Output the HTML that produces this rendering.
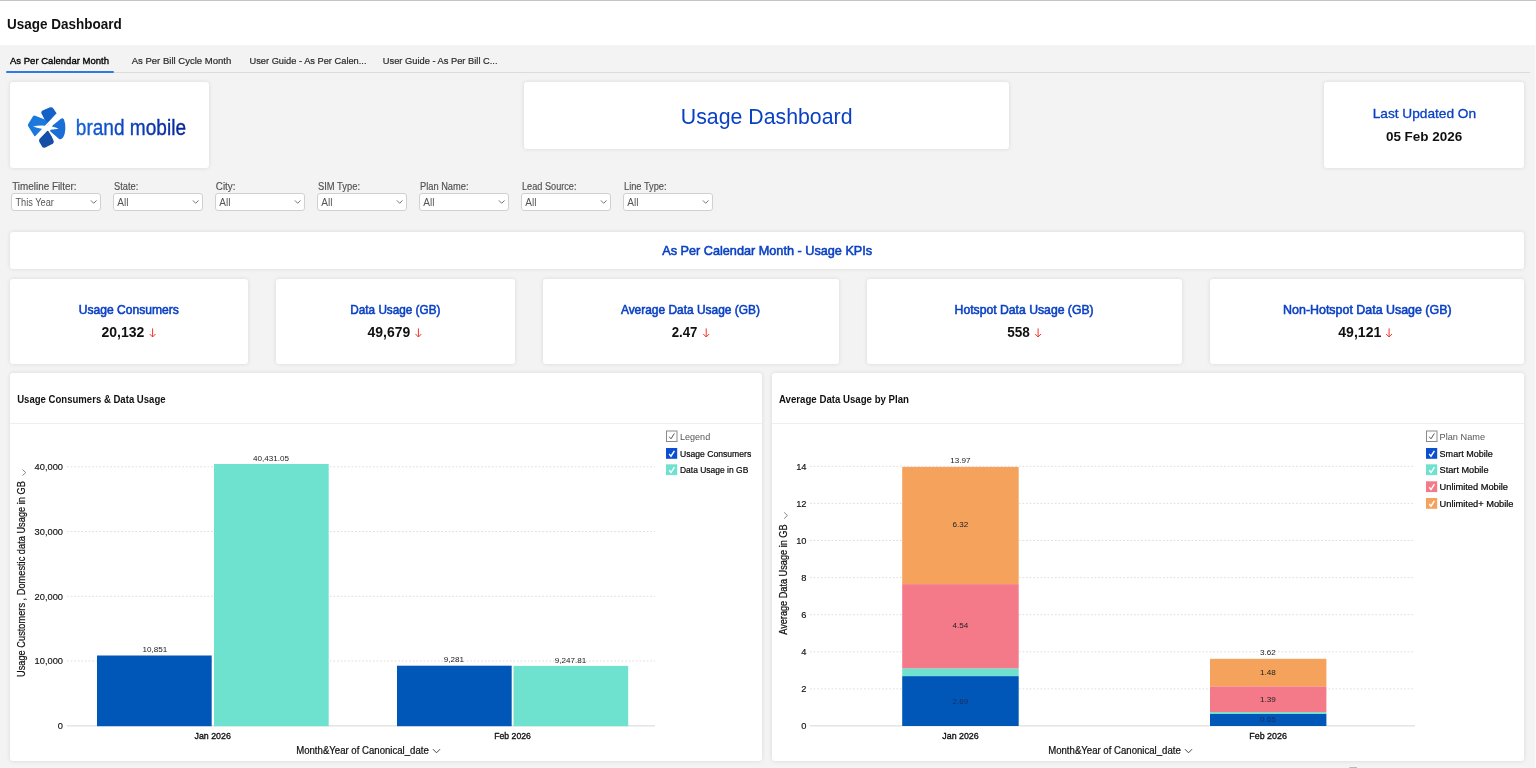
<!DOCTYPE html>
<html>
<head>
<meta charset="utf-8">
<title>Usage Dashboard</title>
<style>
*{box-sizing:border-box;margin:0;padding:0}
html,body{width:1536px;height:768px;overflow:hidden}
body{background:#f3f3f3;font-family:"Liberation Sans",sans-serif;color:#111;position:relative}
.abs{position:absolute}
.card{position:absolute;background:#fff;border-radius:3px;box-shadow:0 0 4px rgba(0,0,0,.11)}
#topbar{left:0;top:0;width:1536px;height:45px;background:#fff;border-top:1px solid #c4c4c4}
#tabline{left:6px;top:71.6px;width:1524px;height:1.2px;background:#dcdcdc}
#tabsel{left:6px;top:71px;width:108px;height:2px;background:#2f7be6;border-radius:1px}
.fsel{position:absolute;top:193px;width:90px;height:18px;background:#fff;border:1px solid #d0d0d0;border-radius:3px}
svg text{white-space:pre}
</style>
</head>
<body>
<div id="topbar" class="abs"></div>
<div id="tabline" class="abs"></div>
<div id="tabsel" class="abs"></div>

<div class="card" style="left:10px;top:82px;width:199.3px;height:86px"></div>
<div class="card" style="left:524px;top:82px;width:485.29999999999995px;height:66.69999999999999px"></div>
<div class="card" style="left:1324px;top:82px;width:200px;height:86px"></div>
<div class="fsel" style="left:11px"></div>
<div class="fsel" style="left:113px"></div>
<div class="fsel" style="left:215px"></div>
<div class="fsel" style="left:317px"></div>
<div class="fsel" style="left:419px"></div>
<div class="fsel" style="left:521px"></div>
<div class="fsel" style="left:623px"></div>
<div class="card" style="left:10px;top:232px;width:1514px;height:37.19999999999999px"></div>
<div class="card" style="left:10px;top:278.7px;width:238px;height:85.5px"></div>
<div class="card" style="left:276.2px;top:278.7px;width:238.40000000000003px;height:85.5px"></div>
<div class="card" style="left:543px;top:278.7px;width:295.70000000000005px;height:85.5px"></div>
<div class="card" style="left:867px;top:278.7px;width:314.79999999999995px;height:85.5px"></div>
<div class="card" style="left:1210px;top:278.7px;width:314px;height:85.5px"></div>
<div class="card" style="left:10px;top:373.3px;width:752px;height:387.7px"></div>
<div class="card" style="left:772px;top:373.3px;width:752px;height:387.7px"></div>
<svg class="abs" style="left:0;top:0;will-change:transform" width="1536" height="768" viewBox="0 0 1536 768" font-family="Liberation Sans, sans-serif">
<defs><linearGradient id="lg" x1="0" x2="1" y1="0" y2="0"><stop offset="0" stop-color="#1562da"/><stop offset="0.45" stop-color="#0d44c0"/><stop offset="1" stop-color="#08259a"/></linearGradient></defs>
<text x="7.00" y="29.20" font-size="15.3" fill="#111" font-weight="bold" textLength="114.70" lengthAdjust="spacingAndGlyphs">Usage Dashboard</text>
<text x="10.00" y="64.30" font-size="9.7" fill="#000" textLength="99.00" lengthAdjust="spacingAndGlyphs" stroke="#000" stroke-width="0.35">As Per Calendar Month</text>
<text x="131.70" y="64.30" font-size="9.7" fill="#2a2a2a" textLength="99.60" lengthAdjust="spacingAndGlyphs" stroke="#2a2a2a" stroke-width="0.2">As Per Bill Cycle Month</text>
<text x="249.50" y="64.30" font-size="9.7" fill="#2a2a2a" textLength="117.00" lengthAdjust="spacingAndGlyphs" stroke="#2a2a2a" stroke-width="0.2">User Guide - As Per Calen...</text>
<text x="382.80" y="64.30" font-size="9.7" fill="#2a2a2a" textLength="114.70" lengthAdjust="spacingAndGlyphs" stroke="#2a2a2a" stroke-width="0.2">User Guide - As Per Bill C...</text>
<!--LOGO-->
<svg x="20" y="100" width="56" height="56" viewBox="0 0 768 768">
<g stroke-linejoin="round" stroke-width="22">
<path d="M302 178 L308 158 L408 112 Q436 104 448 122 L490 184 Q492 194 480 206 L372 330 L352 272 Z" fill="#1462c6" stroke="#1462c6"/>
<path d="M204 226 Q192 222 184 234 L122 334 Q116 346 124 358 L202 482 Q210 492 220 484 L322 386 L380 336 L346 282 Z" fill="#1b78dc" stroke="#1b78dc"/>
<path d="M380 432 L424 502 L452 566 Q455 582 444 590 L342 642 Q322 648 312 634 L274 566 Q268 552 278 540 Z" fill="#154fa8" stroke="#154fa8"/>
<path d="M458 356 L568 266 Q582 256 592 270 Q614 322 611 400 Q607 466 582 508 Q560 536 540 524 L428 428 Q420 420 428 410 Z" fill="#1a6fd6" stroke="#1a6fd6"/>
</g>
<path d="M214 508 L508 194" stroke="#fff" stroke-width="26" fill="none"/>
<path d="M178 362 C280 336 430 352 530 392 C430 424 280 400 178 362 Z" fill="#fff"/>
</svg>
<!--/LOGO-->
<text x="75.80" y="135.00" font-size="22" fill="url(#lg)" textLength="110.20" lengthAdjust="spacingAndGlyphs" stroke="url(#lg)" stroke-width="0.35">brand mobile</text>
<text x="680.80" y="123.50" font-size="22" fill="#0a41c4" textLength="171.70" lengthAdjust="spacingAndGlyphs">Usage Dashboard</text>
<text x="1372.70" y="117.70" font-size="13.1" fill="#0a41c4" textLength="103.40" lengthAdjust="spacingAndGlyphs" stroke="#0a41c4" stroke-width="0.3">Last Updated On</text>
<text x="1385.90" y="140.70" font-size="13.5" fill="#111" font-weight="bold" textLength="76.40" lengthAdjust="spacingAndGlyphs">05 Feb 2026</text>
<text x="12.20" y="189.60" font-size="10" fill="#505050" textLength="64.40" lengthAdjust="spacingAndGlyphs" stroke="#505050" stroke-width="0.15">Timeline Filter:</text>
<text x="15.50" y="205.90" font-size="10" fill="#555" textLength="38.40" lengthAdjust="spacingAndGlyphs">This Year</text>
<path d="M90.9 200.4 L93.7 203.3 L96.5 200.4" fill="none" stroke="#666" stroke-width="0.9"/>
<text x="114.10" y="189.60" font-size="10" fill="#505050" textLength="24.20" lengthAdjust="spacingAndGlyphs" stroke="#505050" stroke-width="0.15">State:</text>
<text x="117.20" y="205.90" font-size="10" fill="#555" textLength="11.20" lengthAdjust="spacingAndGlyphs">All</text>
<path d="M192.9 200.4 L195.7 203.3 L198.5 200.4" fill="none" stroke="#666" stroke-width="0.9"/>
<text x="215.80" y="189.60" font-size="10" fill="#505050" textLength="19.70" lengthAdjust="spacingAndGlyphs" stroke="#505050" stroke-width="0.15">City:</text>
<text x="219.20" y="205.90" font-size="10" fill="#555" textLength="11.20" lengthAdjust="spacingAndGlyphs">All</text>
<path d="M294.9 200.4 L297.7 203.3 L300.5 200.4" fill="none" stroke="#666" stroke-width="0.9"/>
<text x="318.00" y="189.60" font-size="10" fill="#505050" textLength="42.00" lengthAdjust="spacingAndGlyphs" stroke="#505050" stroke-width="0.15">SIM Type:</text>
<text x="321.20" y="205.90" font-size="10" fill="#555" textLength="11.20" lengthAdjust="spacingAndGlyphs">All</text>
<path d="M396.9 200.4 L399.7 203.3 L402.5 200.4" fill="none" stroke="#666" stroke-width="0.9"/>
<text x="420.00" y="189.60" font-size="10" fill="#505050" textLength="48.50" lengthAdjust="spacingAndGlyphs" stroke="#505050" stroke-width="0.15">Plan Name:</text>
<text x="423.20" y="205.90" font-size="10" fill="#555" textLength="11.20" lengthAdjust="spacingAndGlyphs">All</text>
<path d="M498.9 200.4 L501.7 203.3 L504.5 200.4" fill="none" stroke="#666" stroke-width="0.9"/>
<text x="522.00" y="189.60" font-size="10" fill="#505050" textLength="54.50" lengthAdjust="spacingAndGlyphs" stroke="#505050" stroke-width="0.15">Lead Source:</text>
<text x="525.20" y="205.90" font-size="10" fill="#555" textLength="11.20" lengthAdjust="spacingAndGlyphs">All</text>
<path d="M600.9 200.4 L603.7 203.3 L606.5 200.4" fill="none" stroke="#666" stroke-width="0.9"/>
<text x="624.00" y="189.60" font-size="10" fill="#505050" textLength="42.50" lengthAdjust="spacingAndGlyphs" stroke="#505050" stroke-width="0.15">Line Type:</text>
<text x="627.20" y="205.90" font-size="10" fill="#555" textLength="11.20" lengthAdjust="spacingAndGlyphs">All</text>
<path d="M702.9 200.4 L705.7 203.3 L708.5 200.4" fill="none" stroke="#666" stroke-width="0.9"/>
<text x="662.20" y="255.10" font-size="13" fill="#0a41c4" textLength="210.00" lengthAdjust="spacingAndGlyphs" stroke="#0a41c4" stroke-width="0.55">As Per Calendar Month - Usage KPIs</text>
<text x="78.75" y="313.70" font-size="12.3" fill="#0a41c4" textLength="100.00" lengthAdjust="spacingAndGlyphs" stroke="#0a41c4" stroke-width="0.55">Usage Consumers</text>
<text x="101.50" y="337.00" font-size="14.2" fill="#111" font-weight="bold" textLength="42.90" lengthAdjust="spacingAndGlyphs">20,132</text>
<path d="M152.6 328.4 L152.6 337 M149.7 334 L152.6 337 L155.5 334" fill="none" stroke="#f5352b" stroke-width="1"/>
<text x="350.30" y="313.70" font-size="12.3" fill="#0a41c4" textLength="90.10" lengthAdjust="spacingAndGlyphs" stroke="#0a41c4" stroke-width="0.55">Data Usage (GB)</text>
<text x="367.50" y="337.00" font-size="14.2" fill="#111" font-weight="bold" textLength="42.70" lengthAdjust="spacingAndGlyphs">49,679</text>
<path d="M418.4 328.4 L418.4 337 M415.5 334 L418.4 337 L421.3 334" fill="none" stroke="#f5352b" stroke-width="1"/>
<text x="620.90" y="313.70" font-size="12.3" fill="#0a41c4" textLength="139.10" lengthAdjust="spacingAndGlyphs" stroke="#0a41c4" stroke-width="0.55">Average Data Usage (GB)</text>
<text x="671.70" y="337.00" font-size="14.2" fill="#111" font-weight="bold" textLength="25.80" lengthAdjust="spacingAndGlyphs">2.47</text>
<path d="M706.2 328.4 L706.2 337 M703.3 334 L706.2 337 L709.1 334" fill="none" stroke="#f5352b" stroke-width="1"/>
<text x="954.60" y="313.70" font-size="12.3" fill="#0a41c4" textLength="139.00" lengthAdjust="spacingAndGlyphs" stroke="#0a41c4" stroke-width="0.55">Hotspot Data Usage (GB)</text>
<text x="1007.30" y="337.00" font-size="14.2" fill="#111" font-weight="bold" textLength="22.60" lengthAdjust="spacingAndGlyphs">558</text>
<path d="M1038.1 328.4 L1038.1 337 M1035.2 334 L1038.1 337 L1041.0 334" fill="none" stroke="#f5352b" stroke-width="1"/>
<text x="1283.10" y="313.70" font-size="12.3" fill="#0a41c4" textLength="168.50" lengthAdjust="spacingAndGlyphs" stroke="#0a41c4" stroke-width="0.55">Non-Hotspot Data Usage (GB)</text>
<text x="1338.30" y="337.00" font-size="14.2" fill="#111" font-weight="bold" textLength="43.00" lengthAdjust="spacingAndGlyphs">49,121</text>
<path d="M1389.1 328.4 L1389.1 337 M1386.2 334 L1389.1 337 L1392.0 334" fill="none" stroke="#f5352b" stroke-width="1"/>
<rect x="10" y="423" width="752" height="1" fill="#efefef"/>
<rect x="772" y="423" width="752.5" height="1" fill="#efefef"/>
<text x="17.20" y="402.60" font-size="10.5" fill="#111" font-weight="bold" textLength="148.40" lengthAdjust="spacingAndGlyphs">Usage Consumers &amp; Data Usage</text>
<text x="779.00" y="402.60" font-size="10.5" fill="#111" font-weight="bold" textLength="130.00" lengthAdjust="spacingAndGlyphs">Average Data Usage by Plan</text>
<line x1="67" x2="655" y1="661.0" y2="661.0" stroke="#e0e0e0" stroke-width="1" stroke-dasharray="1.8 1.8"/>
<line x1="67" x2="655" y1="596.3" y2="596.3" stroke="#e0e0e0" stroke-width="1" stroke-dasharray="1.8 1.8"/>
<line x1="67" x2="655" y1="531.5" y2="531.5" stroke="#e0e0e0" stroke-width="1" stroke-dasharray="1.8 1.8"/>
<line x1="67" x2="655" y1="466.8" y2="466.8" stroke="#e0e0e0" stroke-width="1" stroke-dasharray="1.8 1.8"/>
<text x="63" y="729.2" font-size="9.3" text-anchor="end" fill="#111" stroke="#111" stroke-width="0.15">0</text>
<text x="63" y="664.4" font-size="9.3" text-anchor="end" fill="#111" stroke="#111" stroke-width="0.15">10,000</text>
<text x="63" y="599.7" font-size="9.3" text-anchor="end" fill="#111" stroke="#111" stroke-width="0.15">20,000</text>
<text x="63" y="534.9" font-size="9.3" text-anchor="end" fill="#111" stroke="#111" stroke-width="0.15">30,000</text>
<text x="63" y="470.2" font-size="9.3" text-anchor="end" fill="#111" stroke="#111" stroke-width="0.15">40,000</text>
<rect x="67" y="725.3" width="588" height="1.1" fill="#dadada"/>
<rect x="97" y="655.5" width="114.7" height="70.7" fill="#0057b8"/>
<rect x="214" y="464.0" width="114.7" height="262.2" fill="#6fe1cf"/>
<rect x="397" y="665.7" width="114.7" height="60.5" fill="#0057b8"/>
<rect x="513.5" y="665.9" width="114.7" height="60.3" fill="#6fe1cf"/>
<text x="154.8" y="652" font-size="8.1" text-anchor="middle" fill="#222">10,851</text>
<text x="271.1" y="461" font-size="8.1" text-anchor="middle" fill="#222">40,431.05</text>
<text x="454" y="661.9" font-size="8.1" text-anchor="middle" fill="#222">9,281</text>
<text x="570.5" y="662.5" font-size="8.1" text-anchor="middle" fill="#222">9,247.81</text>
<text x="194.50" y="738.90" font-size="9.3" fill="#111" textLength="36.30" lengthAdjust="spacingAndGlyphs" stroke="#111" stroke-width="0.35">Jan 2026</text>
<text x="494.30" y="738.80" font-size="9.3" fill="#111" textLength="36.50" lengthAdjust="spacingAndGlyphs" stroke="#111" stroke-width="0.35">Feb 2026</text>
<text x="296.20" y="753.80" font-size="10" fill="#111" textLength="132.60" lengthAdjust="spacingAndGlyphs" stroke="#111" stroke-width="0.22">Month&amp;Year of Canonical_date</text>
<path d="M433 749.2 L436.5 752.8 L440 749.2" fill="none" stroke="#333" stroke-width="0.9"/>
<text transform="translate(25.2,677) rotate(-90)" font-size="10" fill="#111" stroke="#111" stroke-width="0.22" textLength="195.9" lengthAdjust="spacingAndGlyphs">Usage Customers , Domestic data Usage in GB</text>
<path d="M22.5 469.6 L25.7 472.6 L22.5 475.6" fill="none" stroke="#777" stroke-width="0.9"/>
<rect x="666.5" y="431.0" width="10.5" height="10.5" fill="#fff" stroke="#8a8a8a" stroke-width="1"/>
<path d="M669.2 436.7 L671 438.8 L674.4 433.5" fill="none" stroke="#555" stroke-width="1"/>
<text x="680.00" y="439.60" font-size="9.2" fill="#555" textLength="30.20" lengthAdjust="spacingAndGlyphs">Legend</text>
<rect x="666" y="448" width="11.2" height="10.8" fill="#0b4fd0"/>
<path d="M669.2 454 L671 456.2 L674.4 450.8" fill="none" stroke="#fff" stroke-width="1.4"/>
<text x="680.00" y="456.70" font-size="9.2" fill="#000" textLength="71.20" lengthAdjust="spacingAndGlyphs" stroke="#111" stroke-width="0.22">Usage Consumers</text>
<rect x="666" y="464.3" width="11.2" height="10.8" fill="#6fe1cf"/>
<path d="M669.2 470.3 L671 472.5 L674.4 467.1" fill="none" stroke="#fff" stroke-width="1.4"/>
<text x="680.00" y="473.20" font-size="9.2" fill="#000" textLength="68.30" lengthAdjust="spacingAndGlyphs" stroke="#111" stroke-width="0.22">Data Usage in GB</text>
<line x1="810" x2="1415" y1="688.9" y2="688.9" stroke="#e0e0e0" stroke-width="1" stroke-dasharray="1.8 1.8"/>
<line x1="810" x2="1415" y1="651.8" y2="651.8" stroke="#e0e0e0" stroke-width="1" stroke-dasharray="1.8 1.8"/>
<line x1="810" x2="1415" y1="614.7" y2="614.7" stroke="#e0e0e0" stroke-width="1" stroke-dasharray="1.8 1.8"/>
<line x1="810" x2="1415" y1="577.6" y2="577.6" stroke="#e0e0e0" stroke-width="1" stroke-dasharray="1.8 1.8"/>
<line x1="810" x2="1415" y1="540.5" y2="540.5" stroke="#e0e0e0" stroke-width="1" stroke-dasharray="1.8 1.8"/>
<line x1="810" x2="1415" y1="503.4" y2="503.4" stroke="#e0e0e0" stroke-width="1" stroke-dasharray="1.8 1.8"/>
<line x1="810" x2="1415" y1="466.3" y2="466.3" stroke="#e0e0e0" stroke-width="1" stroke-dasharray="1.8 1.8"/>
<text x="806.5" y="729.4" font-size="9.3" text-anchor="end" fill="#111" stroke="#111" stroke-width="0.15">0</text>
<text x="806.5" y="692.3" font-size="9.3" text-anchor="end" fill="#111" stroke="#111" stroke-width="0.15">2</text>
<text x="806.5" y="655.2" font-size="9.3" text-anchor="end" fill="#111" stroke="#111" stroke-width="0.15">4</text>
<text x="806.5" y="618.1" font-size="9.3" text-anchor="end" fill="#111" stroke="#111" stroke-width="0.15">6</text>
<text x="806.5" y="581.0" font-size="9.3" text-anchor="end" fill="#111" stroke="#111" stroke-width="0.15">8</text>
<text x="806.5" y="543.9" font-size="9.3" text-anchor="end" fill="#111" stroke="#111" stroke-width="0.15">10</text>
<text x="806.5" y="506.8" font-size="9.3" text-anchor="end" fill="#111" stroke="#111" stroke-width="0.15">12</text>
<text x="806.5" y="469.7" font-size="9.3" text-anchor="end" fill="#111" stroke="#111" stroke-width="0.15">14</text>
<rect x="810" y="725.3" width="605" height="1.1" fill="#dadada"/>
<rect x="902.2" y="676.1" width="116.5" height="49.9" fill="#0057b8"/>
<rect x="902.2" y="668.3" width="116.5" height="7.8" fill="#6fe1cf"/>
<rect x="902.2" y="584.1" width="116.5" height="84.2" fill="#f47a8a"/>
<rect x="902.2" y="466.9" width="116.5" height="117.2" fill="#f5a35c"/>
<rect x="1210" y="713.9" width="116.40000000000009" height="12.1" fill="#0057b8"/>
<rect x="1210" y="712.1" width="116.40000000000009" height="1.9" fill="#6fe1cf"/>
<rect x="1210" y="686.3" width="116.40000000000009" height="25.8" fill="#f47a8a"/>
<rect x="1210" y="658.8" width="116.40000000000009" height="27.5" fill="#f5a35c"/>
<text x="960.5" y="463" font-size="8.1" text-anchor="middle" fill="#222">13.97</text>
<text x="960.5" y="527" font-size="8.1" text-anchor="middle" fill="#222">6.32</text>
<text x="960.5" y="628" font-size="8.1" text-anchor="middle" fill="#222">4.54</text>
<text x="960.5" y="703.5" font-size="8.1" text-anchor="middle" fill="#152f66">2.69</text>
<text x="1268" y="655" font-size="8.1" text-anchor="middle" fill="#222">3.62</text>
<text x="1268" y="675" font-size="8.1" text-anchor="middle" fill="#222">1.48</text>
<text x="1268" y="701.5" font-size="8.1" text-anchor="middle" fill="#222">1.39</text>
<text x="1268" y="722" font-size="8.1" text-anchor="middle" fill="#152f66">0.65</text>
<text x="942.30" y="738.90" font-size="9.3" fill="#111" textLength="36.40" lengthAdjust="spacingAndGlyphs" stroke="#111" stroke-width="0.35">Jan 2026</text>
<text x="1249.30" y="738.80" font-size="9.3" fill="#111" textLength="37.60" lengthAdjust="spacingAndGlyphs" stroke="#111" stroke-width="0.35">Feb 2026</text>
<text x="1048.20" y="753.80" font-size="10" fill="#111" textLength="132.60" lengthAdjust="spacingAndGlyphs" stroke="#111" stroke-width="0.22">Month&amp;Year of Canonical_date</text>
<path d="M1185 749.2 L1188.5 752.8 L1192 749.2" fill="none" stroke="#333" stroke-width="0.9"/>
<text transform="translate(787.2,634.8) rotate(-90)" font-size="10" fill="#111" stroke="#111" stroke-width="0.22" textLength="110.4" lengthAdjust="spacingAndGlyphs">Average Data Usage in GB</text>
<path d="M784.2 512.4 L787.4 515.5 L784.2 518.6" fill="none" stroke="#777" stroke-width="0.9"/>
<rect x="1426.5" y="431.0" width="10.5" height="10.5" fill="#fff" stroke="#8a8a8a" stroke-width="1"/>
<path d="M1429.2 436.7 L1431 438.8 L1434.4 433.5" fill="none" stroke="#555" stroke-width="1"/>
<text x="1439.60" y="439.60" font-size="9.2" fill="#555" textLength="45.40" lengthAdjust="spacingAndGlyphs">Plan Name</text>
<rect x="1426" y="448" width="11.2" height="10.8" fill="#0b4fd0"/>
<path d="M1429.2 454 L1431 456.2 L1434.4 450.8" fill="none" stroke="#fff" stroke-width="1.4"/>
<text x="1439.60" y="456.70" font-size="9.2" fill="#000" textLength="53.20" lengthAdjust="spacingAndGlyphs" stroke="#111" stroke-width="0.22">Smart Mobile</text>
<rect x="1426" y="464.3" width="11.2" height="10.8" fill="#6fe1cf"/>
<path d="M1429.2 470.3 L1431 472.5 L1434.4 467.1" fill="none" stroke="#fff" stroke-width="1.4"/>
<text x="1439.60" y="473.20" font-size="9.2" fill="#000" textLength="48.90" lengthAdjust="spacingAndGlyphs" stroke="#111" stroke-width="0.22">Start Mobile</text>
<rect x="1426" y="481.3" width="11.2" height="10.8" fill="#f47a8a"/>
<path d="M1429.2 487.3 L1431 489.5 L1434.4 484.1" fill="none" stroke="#fff" stroke-width="1.4"/>
<text x="1439.60" y="490.20" font-size="9.2" fill="#000" textLength="68.40" lengthAdjust="spacingAndGlyphs" stroke="#111" stroke-width="0.22">Unlimited Mobile</text>
<rect x="1426" y="498" width="11.2" height="10.8" fill="#f5a35c"/>
<path d="M1429.2 504 L1431 506.2 L1434.4 500.8" fill="none" stroke="#fff" stroke-width="1.4"/>
<text x="1439.60" y="507.00" font-size="9.2" fill="#000" textLength="73.90" lengthAdjust="spacingAndGlyphs" stroke="#111" stroke-width="0.22">Unlimited+ Mobile</text>
<rect x="1534.8" y="45" width="1.2" height="723" fill="#fafafa"/>
<rect x="1349.5" y="767" width="7.5" height="1" fill="#b8b8b8"/>
</svg>
</body>
</html>
